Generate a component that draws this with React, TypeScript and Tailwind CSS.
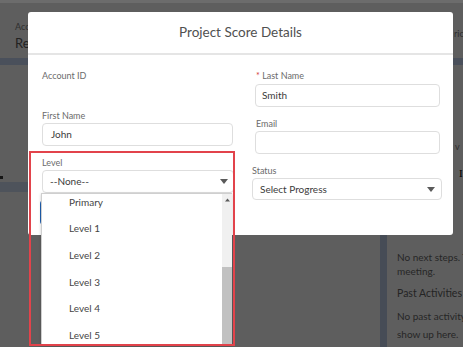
import React from "react";

function Caret({ up = false, className = "" }: { up?: boolean; className?: string }) {
  return (
    <svg width="8" height="5" viewBox="0 0 8 5" className={className}>
      <path d={up ? "M0 5h8L4 0z" : "M0 0h8L4 5z"} fill="#5a5a5a" />
    </svg>
  );
}

export default function App() {
  const items = ["Primary", "Level 1", "Level 2", "Level 3", "Level 4", "Level 5"];
  return (
    <div className="relative w-[463px] h-[347px] overflow-hidden bg-[#5e5e5e] font-['Lato','Liberation_Sans',sans-serif]">
      {/* background page */}
      <div className="flex flex-col h-full">
        <div className="h-[3px] bg-[#6c6c6c]" />
        <div className="h-[55px] flex justify-between">
          <div className="pl-[15px] pt-[18px] flex flex-col">
            <span className="text-[9px] leading-[11px] text-[#2e2e2e]">Account</span>
            <span className="mt-[3px] text-[13px] leading-[16px] text-[#222]">Retail</span>
          </div>
          <div className="pt-[16px] w-[9px] overflow-hidden">
            <span className="text-[9px] leading-[11px] text-[#2e2e2e] whitespace-nowrap">ric</span>
          </div>
        </div>
        <div className="h-[7px] bg-[#4a505b]" />
        <div className="flex-1 flex">
          <div className="w-[28px] flex flex-col">
            <div className="h-[111px]" />
            <div className="h-[3px] w-[3px] bg-[#151515]" />
            <div className="h-[3px]" />
            <div className="h-[10px] bg-[#4e535b]" />
          </div>
          <div className="flex-1" />
          <div className="w-[83px] flex">
            <div className="w-[7px] bg-[#464c56]" />
            <div className="flex-1 flex flex-col overflow-hidden pl-[10px] text-[#262626]">
              <div className="h-[76px]" />
              <div className="h-[12px] pl-[58px] text-[9px] leading-[12px] text-[#2e2e2e]">v</div>
              <div className="h-[14px]" />
              <div className="h-[12px] pl-[62px] text-[11px] leading-[12px] text-black font-['Liberation_Serif',serif]">I</div>
              <div className="h-[71px]" />
              <div className="text-[10px] leading-[14px] whitespace-nowrap">No next steps. To get things moving</div>
              <div className="text-[10px] leading-[14px] whitespace-nowrap">meeting.</div>
              <div className="mt-[8px] text-[10.5px] leading-[15px] whitespace-nowrap text-[#242424]">Past Activities</div>
              <div className="mt-[6px] text-[10px] leading-[18px] whitespace-nowrap">No past activity. Past meetings</div>
              <div className="text-[10px] leading-[18px] whitespace-nowrap">show up here.</div>
            </div>
          </div>
        </div>
      </div>

      {/* modal */}
      <div className="absolute left-[28px] top-[12px] w-[425px] h-[223px] bg-white rounded-[3px]">
        <div className="h-[43px] flex items-center justify-center border-b-2 border-[#e5e5e5] text-[13.5px] text-[#505050]">
          Project Score Details
        </div>
        <div className="grid grid-cols-[191px_185px] gap-x-[22px] pl-[14px] pt-[15px]">
          {/* left column */}
          <div className="flex flex-col">
            <div className="h-[11px] text-[9px] leading-[11px] text-[#6b6b6b]">Account ID</div>
            <div className="mt-[29px] h-[11px] text-[9px] leading-[11px] text-[#6b6b6b]">First Name</div>
            <div className="mt-[2px] h-[23px] border border-[#dedede] rounded-[4px] pl-[8px] flex items-center text-[10px] text-[#3b3b3b]">
              John
            </div>
            <div className="mt-[11px] h-[11px] text-[9px] leading-[11px] text-[#6b6b6b]">Level</div>
            <div className="relative mt-[2px] h-[23px] w-[192px] border border-[#dedede] rounded-[4px] pl-[7px] pr-[5px] flex items-center justify-between text-[10px] text-[#3b3b3b]">
              <span>--None--</span>
              <Caret />
              <div className="absolute left-[-2px] top-[22px] w-[191px] h-[152px] bg-white border-l border-t border-[#cfcfcf] shadow-[0_1px_3px_rgba(0,0,0,0.2)] flex z-10">
                <div className="flex-1 overflow-hidden">
                  <div className="mt-[-5px]">
                    {items.map((it) => (
                      <div key={it} className="h-[26.6px] flex items-center pl-[27px] text-[10px] text-[#454545]">
                        {it}
                      </div>
                    ))}
                  </div>
                </div>
                <div className="w-[10px] bg-[#f0f0f0] flex flex-col items-center">
                  <Caret up className="mt-[4px] w-[5px] h-[4px]" />
                  <div className="flex-1" />
                  <div className="w-full h-[78px] bg-[#c1c1c1]" />
                </div>
              </div>
            </div>
            <div className="mt-[7px] ml-[-2px] h-[25px] w-[60px] bg-[#1e5eb0] rounded-[4px]" />
          </div>
          {/* right column */}
          <div className="flex flex-col">
            <div className="h-[11px] pl-[1px] text-[9px] leading-[11px] text-[#6b6b6b]">
              <span className="text-[#d23a3a]">*</span> Last Name
            </div>
            <div className="mt-[3px] h-[23px] border border-[#dedede] rounded-[4px] pl-[6px] flex items-center text-[10px] text-[#3b3b3b]">
              Smith
            </div>
            <div className="mt-[11px] h-[11px] pl-[1px] text-[9px] leading-[11px] text-[#6b6b6b]">Email</div>
            <div className="mt-[2px] h-[23px] border border-[#dedede] rounded-[4px]" />
            <div className="mt-[11px] ml-[-3px] h-[11px] text-[9px] leading-[11px] text-[#6b6b6b]">Status</div>
            <div className="mt-[2px] ml-[-3px] w-[190px] h-[22px] border border-[#dedede] rounded-[4px] pl-[7px] pr-[6px] flex items-center justify-between text-[10px] text-[#3b3b3b]">
              <span>Select Progress</span>
              <Caret />
            </div>
          </div>
        </div>
      </div>

      {/* annotation */}
      <div className="absolute left-[29px] top-[151px] w-[206px] h-[195px] border-2 border-[#e2434b] pointer-events-none z-20" />
    </div>
  );
}
